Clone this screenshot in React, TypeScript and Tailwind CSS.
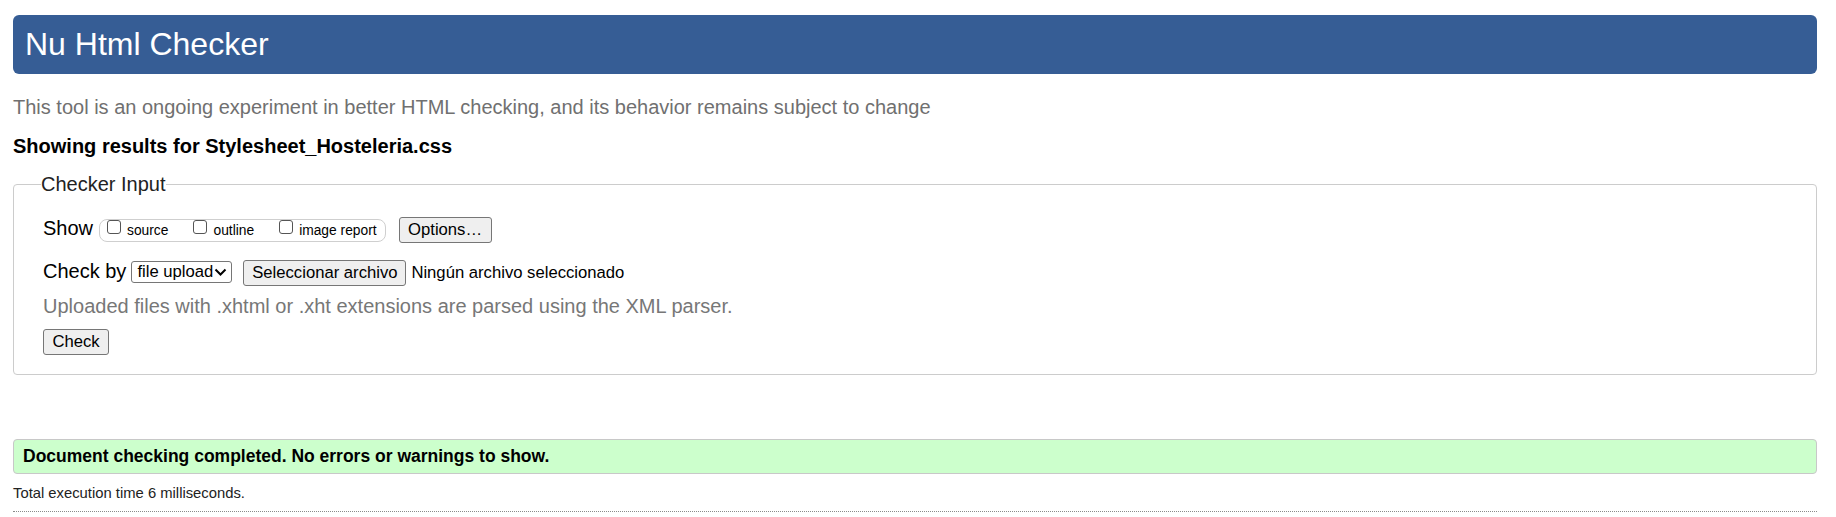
import React from "react";

const options = ["source", "outline", "image report"];

function Box() {
  return <span className="block w-[14px] h-[14px] shrink-0 border border-[#555] rounded-[3px] bg-white" />;
}

function Btn({ label, w }: { label: string; w: string }) {
  return (
    <span className={`flex h-[26px] ${w} shrink-0 items-center justify-center border border-[#767676] rounded-[3px] bg-[#efefef] text-[16.67px] leading-[normal] text-black`}>
      {label}
    </span>
  );
}

export default function App() {
  return (
    <div className="min-h-screen bg-white pl-[13px] pr-[19px] font-['Liberation_Sans',Arial,sans-serif] text-black">
      {/* Banner */}
      <div className="mt-[15px] flex h-[59px] items-center rounded-[6px] bg-[#365d95] pl-[12px]">
        <h1 className="text-[32px] leading-[normal] font-normal text-white">Nu Html Checker</h1>
      </div>

      <p className="mt-[22px] text-[20px] leading-[23px] text-[#707070]">
        This tool is an ongoing experiment in better HTML checking, and its behavior remains subject to change
      </p>

      <p className="mt-[16px] text-[20px] leading-[23px] font-bold">Showing results for Stylesheet_Hosteleria.css</p>

      {/* Checker input */}
      <fieldset className="mt-[15px] border border-[#cccccc] rounded-[4px] pl-[29px] pt-[21px] pb-[19px]">
        <legend className="-ml-[2px] text-[20px] leading-[23px] text-[#222]">Checker Input</legend>

        <div className="flex items-start">
          <span className="text-[20px] leading-[23px]">Show</span>
          <div className="ml-[6px] mt-[2px] flex h-[23px] items-start border border-[#cfcfcf] rounded-[8px] pl-[7px] pr-[8px] gap-[25px]">
            {options.map(o => (
              <div key={o} className="flex items-start">
                <Box />
                <span className="ml-[6px] mt-[3px] text-[13.8px] leading-[normal]">{o}</span>
              </div>
            ))}
          </div>
          <span className="ml-[13px]">
            <Btn label="Options…" w="w-[93px]" />
          </span>
        </div>

        <div className="mt-[17px] flex items-start">
          <span className="text-[20px] leading-[23px]">Check by</span>
          <div className="ml-[5px] mt-[1px] flex h-[22px] w-[101px] items-center border border-[#767676] rounded-[3px] bg-white pl-[5px] pr-[4px]">
            <span className="flex-1 text-[16.67px] leading-[normal]">file upload</span>
            <svg width="13" height="8" viewBox="0 0 13 8" fill="none">
              <path d="M1.5 1.5 L6.5 6.5 L11.5 1.5" stroke="#000" strokeWidth="2" />
            </svg>
          </div>
          <span className="ml-[11px]">
            <Btn label="Seleccionar archivo" w="w-[163px]" />
          </span>
          <span className="ml-[5px] mt-[3px] text-[16.67px] leading-[normal]">Ningún archivo seleccionado</span>
        </div>

        <p className="mt-[9px] text-[20px] leading-[23px] text-[#777]">
          Uploaded files with .xhtml or .xht extensions are parsed using the XML parser.
        </p>

        <div className="mt-[11px] flex">
          <Btn label="Check" w="w-[66px]" />
        </div>
      </fieldset>

      {/* Result */}
      <div className="mt-[64px] flex h-[35px] items-center border border-[#c8c8c8] rounded-[4px] bg-[#ccffcc] pl-[9px]">
        <span className="text-[17.5px] leading-[normal] font-bold">Document checking completed. No errors or warnings to show.</span>
      </div>

      <p className="mt-[11px] text-[14.8px] leading-[normal] text-[#222]">Total execution time 6 milliseconds.</p>

      <hr className="mt-[10px] border-0 border-t border-dotted border-[#8a8a8a]" />
    </div>
  );
}
